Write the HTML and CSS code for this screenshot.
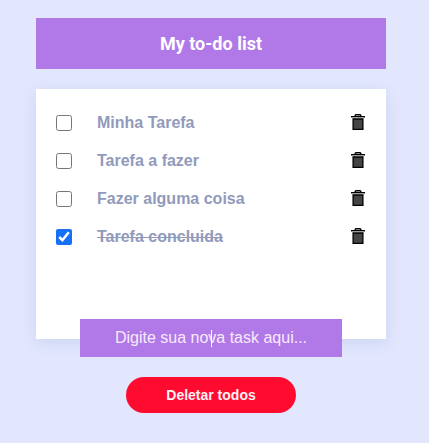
FILE: index.html
```html
<!DOCTYPE html>
<html lang="pt">
<head>
<meta charset="utf-8">
<title>My to-do list</title>
<link rel="stylesheet" href="styles.css">
</head>
<body>
<svg class="sprite" width="0" height="0">
  <symbol id="trash" viewBox="0 0 14 17">
    <path d="M4.2 2V1.4Q4.4.7 5.2.7h3.6q.8 0 1 .7V2" fill="none" stroke="#000" stroke-width="1.4"/>
    <path d="M0 2h14v1.5H0z" fill="#000"/>
    <path d="M1 3.5h12v1H1z" fill="#bbb"/>
    <path d="M2.1 5h9.8v10.4H2.1z" fill="#444" stroke="#000" stroke-width="1.3"/>
  </symbol>
</svg>
<main class="app">
  <h1 class="title">My to-do list</h1>
  <ul class="tasks">
    <li class="task"><input class="check" type="checkbox"><span class="name">Minha Tarefa</span><svg class="trash"><use href="#trash"/></svg></li>
    <li class="task"><input class="check" type="checkbox"><span class="name">Tarefa a fazer</span><svg class="trash"><use href="#trash"/></svg></li>
    <li class="task"><input class="check" type="checkbox"><span class="name">Fazer alguma coisa</span><svg class="trash"><use href="#trash"/></svg></li>
    <li class="task"><input class="check" type="checkbox" checked><span class="name done">Tarefa concluida</span><svg class="trash"><use href="#trash"/></svg></li>
  </ul>
  <div class="new-task">Digite sua nova task aqui...<span class="caret"></span></div>
  <button class="clear">Deletar todos</button>
</main>
</body>
</html>
```

FILE: styles.css
```css
* { box-sizing: border-box; }
body {
  margin: 0;
  min-height: 100vh;
  background: #e2e7fe;
  font-family: "Liberation Sans", Arial, sans-serif;
}
.sprite { display: block; }
.app {
  display: flex;
  flex-direction: column;
  align-items: center;
  width: 350px;
  margin-left: 36px;
  padding-top: 18px;
}
.title {
  width: 100%;
  height: 51px;
  margin: 0 0 20px;
  background: #b079e7;
  color: #fff;
  font: 700 18px/51px Roboto, sans-serif;
  text-align: center;
}
.tasks {
  width: 100%;
  height: 250px;
  margin: 0;
  padding: 15px 20px;
  list-style: none;
  background: #fff;
  box-shadow: 0 4px 14px rgba(80, 90, 150, .13);
}
.task {
  display: flex;
  align-items: center;
  height: 38px;
}
.check {
  width: 16px;
  height: 16px;
  margin: 0 25px 0 0;
  accent-color: #1670f8;
}
.name {
  flex: 1;
  color: #929abc;
  font-size: 16px;
  font-weight: 700;
  line-height: 18px;
}
.done { text-decoration: line-through; }
.trash {
  width: 14px;
  height: 17px;
  margin: 0 1px 1px 0;
}
.new-task {
  position: relative;
  width: 262px;
  height: 38px;
  margin-top: -20px;
  background: #b079e7;
  color: #f7eafe;
  font-size: 16px;
  line-height: 38px;
  text-align: center;
}
.caret {
  position: absolute;
  left: 131px;
  top: 11px;
  width: 1px;
  height: 17px;
  background: #fff;
}
.clear {
  width: 170px;
  height: 36px;
  margin-top: 20px;
  padding: 0;
  border: 0;
  border-radius: 18px;
  background: #ff0b30;
  color: #fff0f4;
  font: 700 14px "Liberation Sans", Arial, sans-serif;
}
```
